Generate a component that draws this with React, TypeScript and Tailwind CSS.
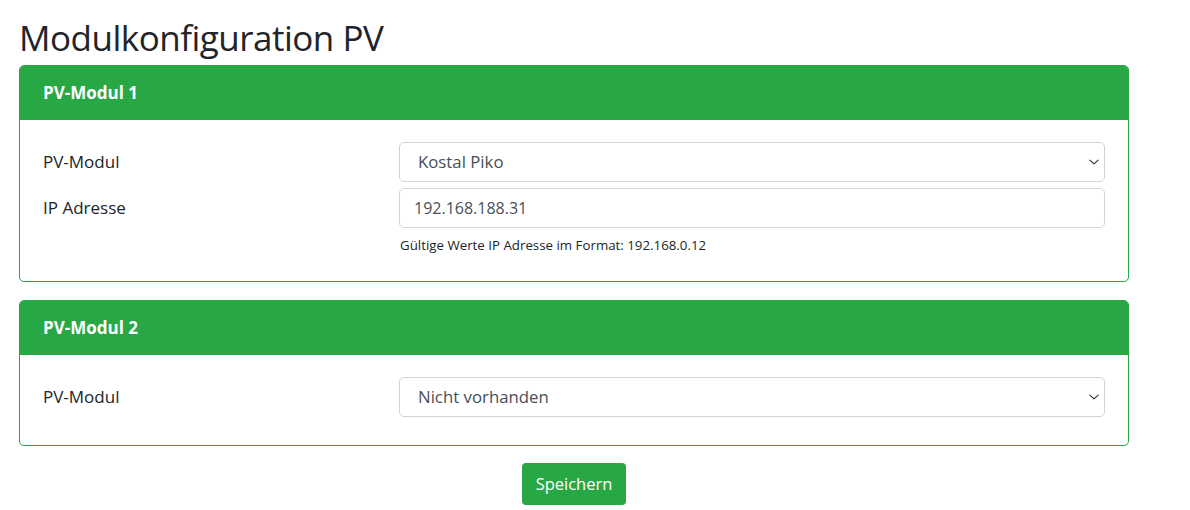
import React from "react";

const font = { fontFamily: '"Open Sans", "Noto Sans", sans-serif' };

function Chevron() {
  return (
    <svg width="12" height="12" viewBox="0 0 16 16" className="absolute right-[4px] top-1/2 -translate-y-1/2">
      <path d="M2.5 5.5l5.5 5 5.5-5" fill="none" stroke="#343a40" strokeWidth="1.6" strokeLinecap="round" strokeLinejoin="round" />
    </svg>
  );
}

function SelectBox({ value }: { value: string }) {
  return (
    <div className="relative w-[706px] h-[40px] border border-[#ced4da] rounded-[5px] bg-white flex items-center pl-[18px] text-[16.8px] text-[#495057]">
      {value}
      <Chevron />
    </div>
  );
}

function InputBox({ value }: { value: string }) {
  return (
    <div className="w-[706px] h-[40px] border border-[#ced4da] rounded-[5px] bg-white flex items-center pl-[14px] text-[16px] text-[#495057]">
      {value}
    </div>
  );
}

function Card({ title, children }: { title: string; children: React.ReactNode }) {
  return (
    <div className="w-[1110px] border border-[#28a745] rounded-[5px] overflow-hidden">
      <div className="h-[54px] bg-[#28a745] text-white font-bold text-[17px] flex items-center pl-[23px]">{title}</div>
      <div className="px-[23px] pt-[22px]">{children}</div>
    </div>
  );
}

function Row({ label, children }: { label: string; children: React.ReactNode }) {
  return (
    <div className="flex items-start">
      <div className="w-[357px] h-[40px] flex items-center text-[17px] text-[#212529]">{label}</div>
      <div>{children}</div>
    </div>
  );
}

export default function App() {
  return (
    <div className="w-[1190px] h-[510px] bg-white text-[#212529]" style={font}>
      <div className="pl-[19px] pt-[18px]">
        <h2 className="text-[35px] leading-[40px] tracking-[-0.5px] mb-[7px] text-[#212529]">Modulkonfiguration PV</h2>
        <Card title="PV-Modul 1">
          <Row label="PV-Modul">
            <SelectBox value="Kostal Piko" />
          </Row>
          <div className="h-[6px]" />
          <Row label="IP Adresse">
            <InputBox value="192.168.188.31" />
          </Row>
          <div className="pl-[357px] pt-[7px] pb-[26px] text-[13.3px] leading-[20px] text-[#212529]">
            Gültige Werte IP Adresse im Format: 192.168.0.12
          </div>
        </Card>
        <div className="h-[18px]" />
        <Card title="PV-Modul 2">
          <Row label="PV-Modul">
            <SelectBox value="Nicht vorhanden" />
          </Row>
          <div className="h-[28px]" />
        </Card>
        <div className="w-[1110px] flex justify-center pt-[17px]">
          <button className="w-[104px] h-[42px] bg-[#28a745] text-white rounded-[4px] text-[16.5px]">Speichern</button>
        </div>
      </div>
    </div>
  );
}
